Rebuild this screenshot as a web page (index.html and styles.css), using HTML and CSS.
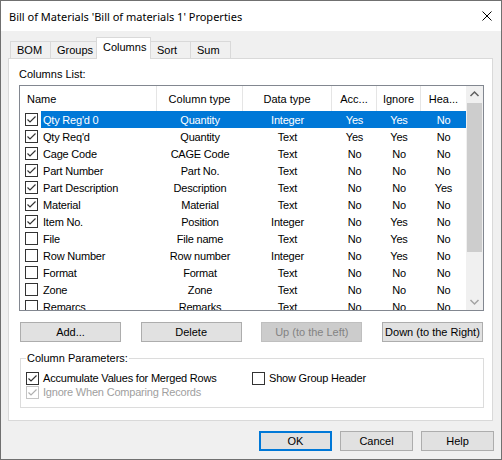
FILE: index.html
```html
<!DOCTYPE html>
<html>
<head>
<meta charset="utf-8">
<link rel="stylesheet" href="styles.css">
</head>
<body>
<div class="window">
  <div class="titlebar">
    <span class="title">Bill of Materials 'Bill of materials 1' Properties</span>
    <svg class="close" width="10" height="10" viewBox="0 0 10 10"><path d="M0.5 0.5 L9.5 9.5 M9.5 0.5 L0.5 9.5" stroke="#000" stroke-width="1" fill="none"/></svg>
  </div>
  <div class="client">
    <div class="tabs">
      <div class="tab w41">BOM</div>
      <div class="tab w47">Groups</div>
      <div class="tab w55 active">Columns</div>
      <div class="tab w41">Sort</div>
      <div class="tab w41">Sum</div>
    </div>
    <div class="panel">
      <div class="label">Columns List:</div>
      <div class="listbox">
        <div class="list-main">
          <div class="lv-head">
            <div class="h c1 left">Name</div>
            <div class="h c2">Column type</div>
            <div class="h c3">Data type</div>
            <div class="h c4">Acc...</div>
            <div class="h c5">Ignore</div>
            <div class="h c6 last">Hea...</div>
          </div>
          <div class="rows">
            <div class="row sel">
              <div class="cb-cell"><svg class="cb" viewBox="0 0 13 13"><rect x="0.5" y="0.5" width="12" height="12" fill="#fff" stroke="#333"/><path d="M2.5 6.5 L5 9 L10.5 3.5" fill="none" stroke="#333" stroke-width="1.2"/></svg></div>
              <div class="cells"><span class="name">Qty Reg'd 0</span><span>Quantity</span><span>Integer</span><span>Yes</span><span>Yes</span><span>No</span></div>
            </div>
            <div class="row">
              <div class="cb-cell"><svg class="cb" viewBox="0 0 13 13"><rect x="0.5" y="0.5" width="12" height="12" fill="#fff" stroke="#333"/><path d="M2.5 6.5 L5 9 L10.5 3.5" fill="none" stroke="#333" stroke-width="1.2"/></svg></div>
              <div class="cells"><span class="name">Qty Req'd</span><span>Quantity</span><span>Text</span><span>Yes</span><span>Yes</span><span>No</span></div>
            </div>
            <div class="row">
              <div class="cb-cell"><svg class="cb" viewBox="0 0 13 13"><rect x="0.5" y="0.5" width="12" height="12" fill="#fff" stroke="#333"/><path d="M2.5 6.5 L5 9 L10.5 3.5" fill="none" stroke="#333" stroke-width="1.2"/></svg></div>
              <div class="cells"><span class="name">Cage Code</span><span>CAGE Code</span><span>Text</span><span>No</span><span>No</span><span>No</span></div>
            </div>
            <div class="row">
              <div class="cb-cell"><svg class="cb" viewBox="0 0 13 13"><rect x="0.5" y="0.5" width="12" height="12" fill="#fff" stroke="#333"/><path d="M2.5 6.5 L5 9 L10.5 3.5" fill="none" stroke="#333" stroke-width="1.2"/></svg></div>
              <div class="cells"><span class="name">Part Number</span><span>Part No.</span><span>Text</span><span>No</span><span>No</span><span>No</span></div>
            </div>
            <div class="row">
              <div class="cb-cell"><svg class="cb" viewBox="0 0 13 13"><rect x="0.5" y="0.5" width="12" height="12" fill="#fff" stroke="#333"/><path d="M2.5 6.5 L5 9 L10.5 3.5" fill="none" stroke="#333" stroke-width="1.2"/></svg></div>
              <div class="cells"><span class="name">Part Description</span><span>Description</span><span>Text</span><span>No</span><span>No</span><span>Yes</span></div>
            </div>
            <div class="row">
              <div class="cb-cell"><svg class="cb" viewBox="0 0 13 13"><rect x="0.5" y="0.5" width="12" height="12" fill="#fff" stroke="#333"/><path d="M2.5 6.5 L5 9 L10.5 3.5" fill="none" stroke="#333" stroke-width="1.2"/></svg></div>
              <div class="cells"><span class="name">Material</span><span>Material</span><span>Text</span><span>No</span><span>No</span><span>No</span></div>
            </div>
            <div class="row">
              <div class="cb-cell"><svg class="cb" viewBox="0 0 13 13"><rect x="0.5" y="0.5" width="12" height="12" fill="#fff" stroke="#333"/><path d="M2.5 6.5 L5 9 L10.5 3.5" fill="none" stroke="#333" stroke-width="1.2"/></svg></div>
              <div class="cells"><span class="name">Item No.</span><span>Position</span><span>Integer</span><span>No</span><span>Yes</span><span>No</span></div>
            </div>
            <div class="row">
              <div class="cb-cell"><svg class="cb" viewBox="0 0 13 13"><rect x="0.5" y="0.5" width="12" height="12" fill="#fff" stroke="#333"/></svg></div>
              <div class="cells"><span class="name">File</span><span>File name</span><span>Text</span><span>No</span><span>Yes</span><span>No</span></div>
            </div>
            <div class="row">
              <div class="cb-cell"><svg class="cb" viewBox="0 0 13 13"><rect x="0.5" y="0.5" width="12" height="12" fill="#fff" stroke="#333"/></svg></div>
              <div class="cells"><span class="name">Row Number</span><span>Row number</span><span>Integer</span><span>No</span><span>Yes</span><span>No</span></div>
            </div>
            <div class="row">
              <div class="cb-cell"><svg class="cb" viewBox="0 0 13 13"><rect x="0.5" y="0.5" width="12" height="12" fill="#fff" stroke="#333"/></svg></div>
              <div class="cells"><span class="name">Format</span><span>Format</span><span>Text</span><span>No</span><span>No</span><span>No</span></div>
            </div>
            <div class="row">
              <div class="cb-cell"><svg class="cb" viewBox="0 0 13 13"><rect x="0.5" y="0.5" width="12" height="12" fill="#fff" stroke="#333"/></svg></div>
              <div class="cells"><span class="name">Zone</span><span>Zone</span><span>Text</span><span>No</span><span>No</span><span>No</span></div>
            </div>
            <div class="row">
              <div class="cb-cell"><svg class="cb" viewBox="0 0 13 13"><rect x="0.5" y="0.5" width="12" height="12" fill="#fff" stroke="#333"/></svg></div>
              <div class="cells"><span class="name">Remarcs</span><span>Remarks</span><span>Text</span><span>No</span><span>No</span><span>No</span></div>
            </div>
          </div>
        </div>
        <div class="vscroll">
          <div class="arrow"><svg width="17" height="17" viewBox="0 0 17 17"><path d="M4.5 10 L8.5 6 L12.5 10" fill="none" stroke="#606060" stroke-width="1.5"/></svg></div>
          <div class="thumb"></div>
          <div class="track"></div>
          <div class="arrow"><svg width="17" height="17" viewBox="0 0 17 17"><path d="M4.5 7 L8.5 11 L12.5 7" fill="none" stroke="#a3a3a3" stroke-width="1.5"/></svg></div>
        </div>
      </div>
      <div class="btnrow">
        <div class="btn">Add...</div>
        <div class="btn">Delete</div>
        <div class="btn disabled">Up (to the Left)</div>
        <div class="btn">Down (to the Right)</div>
      </div>
      <fieldset class="group">
        <legend>Column Parameters:</legend>
        <div class="opts">
          <div class="opt"><svg class="cb" viewBox="0 0 13 13"><rect x="0.5" y="0.5" width="12" height="12" fill="#fff" stroke="#333"/><path d="M2.5 6.5 L5 9 L10.5 3.5" fill="none" stroke="#333" stroke-width="1.2"/></svg><span>Accumulate Values for Merged Rows</span></div>
          <div class="opt"><svg class="cb" viewBox="0 0 13 13"><rect x="0.5" y="0.5" width="12" height="12" fill="#fff" stroke="#333"/></svg><span>Show Group Header</span></div>
          <div class="opt disabled"><svg class="cb" viewBox="0 0 13 13"><rect x="0.5" y="0.5" width="12" height="12" fill="#fff" stroke="#c4c4c4"/><path d="M2.5 6.5 L5 9 L10.5 3.5" fill="none" stroke="#b0b0b0" stroke-width="1.2"/></svg><span>Ignore When Comparing Records</span></div>
        </div>
      </fieldset>
    </div>
    <div class="dlg">
      <div class="dbtn default">OK</div>
      <div class="dbtn">Cancel</div>
      <div class="dbtn">Help</div>
    </div>
  </div>
</div>
</body>
</html>
```
FILE: styles.css
```css
html, body {
  margin: 0;
  padding: 0;
}
body {
  width: 502px;
  height: 460px;
  overflow: hidden;
  font: 11px "Liberation Sans", Arial, sans-serif;
  color: #000;
  background: #f0f0f0;
}
.window {
  box-sizing: border-box;
  width: 502px;
  height: 460px;
  border: 1px solid #707070;
  background: #f0f0f0;
  display: flex;
  flex-direction: column;
}
.titlebar {
  height: 30px;
  flex: none;
  background: #fff;
  display: flex;
  align-items: center;
  justify-content: space-between;
  padding: 0 9px 0 8px;
}
.title {
  font: 11px "Noto Sans", "Open Sans", sans-serif;
  white-space: nowrap;
}
.close {
  display: block;
}
.client {
  flex: 1;
  padding: 6px 7px 0 7px;
  display: flex;
  flex-direction: column;
}
.tabs {
  display: flex;
  align-items: flex-end;
  height: 22px;
  margin-bottom: -1px;
  padding-left: 2px;
}
.tab {
  box-sizing: border-box;
  height: 18px;
  border: 1px solid #d9d9d9;
  border-bottom: none;
  margin-right: -1px;
  padding-left: 6px;
  line-height: 16px;
  white-space: nowrap;
}
.w41 { width: 41px; }
.w47 { width: 47px; }
.w55 { width: 55px; }
.tab.active {
  height: 22px;
  background: #fff;
  position: relative;
  z-index: 1;
  line-height: 19px;
}
.panel {
  box-sizing: border-box;
  width: 485px;
  height: 363px;
  background: #fff;
  border: 1px solid #d9d9d9;
  padding: 8px 8px 12px 10px;
}
.label {
  line-height: 14px;
  margin-bottom: 4px;
}
.listbox {
  box-sizing: border-box;
  width: 465px;
  height: 226px;
  border: 1px solid #828790;
  display: flex;
  overflow: hidden;
}
.list-main {
  width: 446px;
  overflow: hidden;
}
.lv-head {
  display: flex;
  height: 25px;
}
.lv-head .h {
  box-sizing: border-box;
  border-right: 1px solid #e5e5e5;
  display: flex;
  align-items: center;
  justify-content: center;
  white-space: nowrap;
}
.lv-head .h.left {
  justify-content: flex-start;
  padding-left: 7px;
}
.lv-head .h.last {
  border-right: none;
}
.c1 { width: 137px; }
.c2 { width: 86px; }
.c3 { width: 89px; }
.c4 { width: 45px; }
.c5 { width: 44px; }
.c6 { width: 45px; }
.row {
  display: flex;
  height: 17px;
}
.cb-cell {
  box-sizing: border-box;
  width: 21px;
  padding-left: 5px;
  display: flex;
  align-items: center;
}
.cb {
  width: 13px;
  height: 13px;
  display: block;
  flex: none;
}
.cells {
  flex: 1;
  display: grid;
  grid-template-columns: 116px 86px 89px 45px 44px 45px;
  align-items: center;
  white-space: nowrap;
  letter-spacing: -0.2px;
}
.cells span {
  text-align: center;
}
.cells .name {
  text-align: left;
  padding-left: 2px;
}
.row.sel .cells {
  background: #0078d7;
  color: #fff;
}
.vscroll {
  width: 17px;
  background: #f0f0f0;
  display: flex;
  flex-direction: column;
}
.arrow {
  height: 17px;
  flex: none;
}
.arrow svg {
  display: block;
}
.thumb {
  height: 149px;
  margin: 0 1px;
  background: #cdcdcd;
  flex: none;
}
.track {
  flex: 1;
}
.btnrow {
  width: 463px;
  margin: 11px 0 0 1px;
  display: flex;
  justify-content: space-between;
}
.btn {
  box-sizing: border-box;
  width: 101px;
  height: 20px;
  border: 1px solid #adadad;
  background: #e1e1e1;
  display: flex;
  align-items: center;
  justify-content: center;
  white-space: nowrap;
}
.btn.disabled {
  background: #cccccc;
  border-color: #bfbfbf;
  color: #838383;
}
.group {
  box-sizing: border-box;
  width: 464px;
  height: 57px;
  margin: 9px 0 0 1px;
  border: 1px solid #dcdcdc;
  padding: 6px 5px 0 5px;
  min-width: 0;
}
.group legend {
  padding: 0 1px;
  line-height: 14px;
}
.opts {
  display: grid;
  grid-template-columns: 226px auto;
  grid-auto-rows: 14px;
  letter-spacing: -0.2px;
}
.opt {
  display: flex;
  align-items: center;
  gap: 4px;
  white-space: nowrap;
}
.opt.disabled {
  color: #a0a0a0;
}
.dlg {
  display: flex;
  justify-content: flex-end;
  gap: 8px;
  margin-top: 10px;
}
.dbtn {
  box-sizing: border-box;
  width: 73px;
  height: 20px;
  border: 1px solid #adadad;
  background: #e1e1e1;
  display: flex;
  align-items: center;
  justify-content: center;
}
.dbtn.default {
  border: 2px solid #0078d7;
}
```
